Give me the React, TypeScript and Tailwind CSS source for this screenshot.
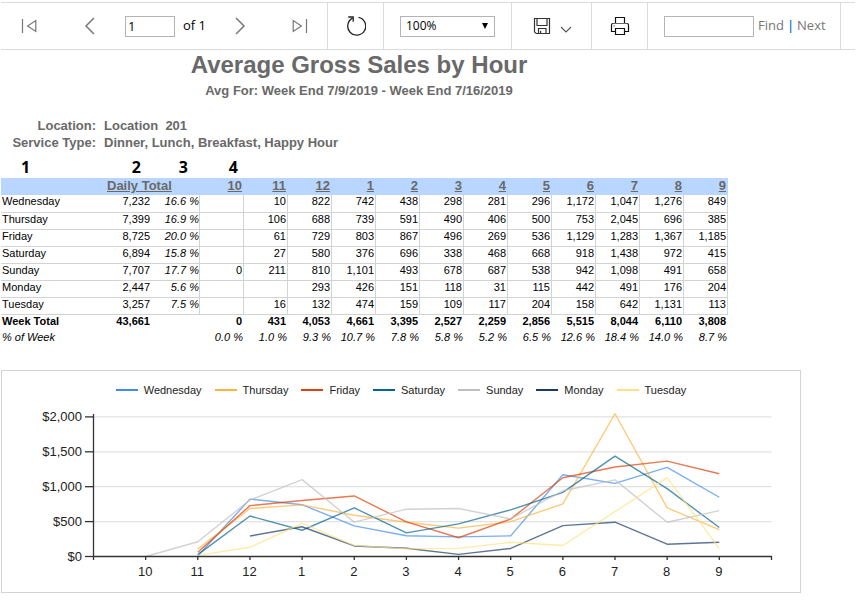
import { useState } from "react";

const HOURS = ["10", "11", "12", "1", "2", "3", "4", "5", "6", "7", "8", "9"];

type DayRow = {
  day: string;
  pct: string;
  total: number;
  color: string;
  sales: (number | null)[];
};

const rows: DayRow[] = [
  { day: "Wednesday", total: 7232, pct: "16.6 %", color: "#418cf0", sales: [null, 10, 822, 742, 438, 298, 281, 296, 1172, 1047, 1276, 849] },
  { day: "Thursday", total: 7399, pct: "16.9 %", color: "#fcb441", sales: [null, 106, 688, 739, 591, 490, 406, 500, 753, 2045, 696, 385] },
  { day: "Friday", total: 8725, pct: "20.0 %", color: "#e0400a", sales: [null, 61, 729, 803, 867, 496, 269, 536, 1129, 1283, 1367, 1185] },
  { day: "Saturday", total: 6894, pct: "15.8 %", color: "#056492", sales: [null, 27, 580, 376, 696, 338, 468, 668, 918, 1438, 972, 415] },
  { day: "Sunday", total: 7707, pct: "17.7 %", color: "#bfbfbf", sales: [0, 211, 810, 1101, 493, 678, 687, 538, 942, 1098, 491, 658] },
  { day: "Monday", total: 2447, pct: "5.6 %", color: "#1a3b69", sales: [null, null, 293, 426, 151, 118, 31, 115, 442, 491, 176, 204] },
  { day: "Tuesday", total: 3257, pct: "7.5 %", color: "#ffe382", sales: [null, 16, 132, 474, 159, 109, 117, 204, 158, 642, 1131, 113] },
];

const weekTotals = [0, 431, 4053, 4661, 3395, 2527, 2259, 2856, 5515, 8044, 6110, 3808];
const weekPct = ["0.0", "1.0", "9.3", "10.7", "7.8", "5.8", "5.2", "6.5", "12.6", "18.4", "14.0", "8.7"];

const fmt = (n: number) => n.toLocaleString("en-US");

function Toolbar() {
  const [page, setPage] = useState("1");
  const [zoom, setZoom] = useState("100%");
  const [search, setSearch] = useState("");

  return (
    <div className="ml-px mr-1 flex h-12 border-y border-[#dadada] font-['Open_Sans',sans-serif] text-[13px] text-black">
      <div className="flex w-[327px] items-center gap-[29px] border-r border-[#dadada] pl-5">
        <button type="button" aria-label="First page" className="mr-4">
          <svg width="16" height="16" viewBox="0 0 16 16" fill="none" stroke="#777" strokeWidth="1.2">
            <path d="M1.5 1v14M14.8 2.6v10.8L6.6 8z" />
          </svg>
        </button>
        <button type="button" aria-label="Previous page">
          <svg width="14" height="18" viewBox="0 0 14 18" fill="none" stroke="#777" strokeWidth="1.5">
            <path d="M12 1 4 9l8 8" />
          </svg>
        </button>
        <div className="flex items-center gap-2">
          <input
            aria-label="Page"
            value={page}
            onChange={(e) => setPage(e.target.value)}
            className="h-[21px] w-[50px] border border-[#b4b4b4] px-[2px]"
          />
          <span className="whitespace-nowrap">of 1</span>
        </div>
        <button type="button" aria-label="Next page">
          <svg width="12" height="18" viewBox="0 0 12 18" fill="none" stroke="#777" strokeWidth="1.5">
            <path d="m1 1 8 8-8 8" />
          </svg>
        </button>
        <button type="button" aria-label="Last page" className="ml-4">
          <svg width="16" height="16" viewBox="0 0 16 16" fill="none" stroke="#777" strokeWidth="1.2">
            <path d="M14.5 1v14M1.2 2.6v10.8L9.4 8z" />
          </svg>
        </button>
      </div>

      <div className="flex w-14 items-center justify-center border-r border-[#dadada]">
        <button type="button" aria-label="Refresh">
          <svg width="20" height="20" viewBox="0 0 20 20" fill="none" stroke="#222" strokeWidth="1.3">
            <path d="M12.6 1.4A9 9 0 1 1 6.6 2.2" />
            <path d="M2.2 1h5v4.8" />
          </svg>
        </button>
      </div>

      <div className="flex w-32 items-center border-r border-[#dadada] pl-4">
        <div className="relative">
          <select
            aria-label="Zoom"
            value={zoom}
            onChange={(e) => setZoom(e.target.value)}
            className="block h-[21px] w-[95px] appearance-none border border-[#b4b4b4] bg-white pl-[5px] text-xs"
          >
            <option>50%</option>
            <option>75%</option>
            <option>100%</option>
            <option>150%</option>
            <option>200%</option>
          </select>
          <svg className="pointer-events-none absolute right-[7px] top-[7px]" width="6" height="6" viewBox="0 0 6 6">
            <path d="M0 0h6L3 6z" fill="#000" />
          </svg>
        </div>
      </div>

      <div className="flex w-20 items-center border-r border-[#dadada] pl-[21px]">
        <button type="button" aria-label="Export" className="flex items-center gap-[9px]">
          <svg width="18" height="18" viewBox="0 0 18 18" fill="none" stroke="#333" strokeWidth="1.2">
            <path d="M1.5 1.5h15v15H3.2l-1.7-1.7zM5.5 16.5v-5h7.5v5M7.6 16.5v-2.8" />
            <path d="M4 1.5v7h10v-7" />
          </svg>
          <svg className="mt-1.5" width="12" height="7" viewBox="0 0 12 7" fill="none" stroke="#555" strokeWidth="1.1">
            <path d="m1 1 5 5 5-5" />
          </svg>
        </button>
      </div>

      <div className="flex w-14 items-center justify-center border-r border-[#dadada]">
        <button type="button" aria-label="Print">
          <svg width="20" height="20" viewBox="0 0 20 20" fill="none" stroke="#111" strokeWidth="1.2">
            <path d="M5.5 7.5v-6h9v6M5.5 15.5H1.5V9q0-1.5 1.5-1.5M17 7.5q1.5 0 1.5 1.5v6.5h-4" />
            <path d="M5.5 12.5h9v6h-9z" />
            <path d="M3 7.5h14M3.5 10h1.5" stroke="#666" />
          </svg>
        </button>
      </div>

      <div className="flex items-center border-r border-[#dadada] pl-4 pr-[14px] text-[#777]">
        <input
          aria-label="Search text"
          value={search}
          onChange={(e) => setSearch(e.target.value)}
          className="mr-1 h-[21px] w-[90px] border border-[#b4b4b4] px-1 text-black"
        />
        <a href="#find">Find</a>
        <span className="mx-[3px] font-semibold text-[#0078c8]">|</span>
        <a href="#next">Next</a>
      </div>
    </div>
  );
}

function SalesTable() {
  return (
    <table className="ml-px table-fixed border-separate border-spacing-0 text-[11px] leading-3 text-black">
      <colgroup>
        <col className="w-[106px]" />
        <col className="w-[44px]" />
        <col className="w-[49px]" />
        {HOURS.map((h) => (
          <col key={h} className="w-[44px]" />
        ))}
      </colgroup>
      <thead>
        <tr className="h-[27px] font-['Open_Sans',sans-serif] text-base leading-4">
          <td className="pb-[3px] pl-5 align-bottom font-bold">1</td>
          <td className="pb-[3px] pr-[10px] text-right align-bottom font-bold">2</td>
          <td className="pb-[3px] pr-3 text-right align-bottom font-bold">3</td>
          <td className="pb-[3px] pr-1.5 text-right align-bottom font-bold">4</td>
          <td colSpan={11}></td>
        </tr>
        <tr className="h-[17px] bg-[#b8d6ff] text-[13px] leading-[15px] text-[#696969]">
          <th className="p-0"></th>
          <th colSpan={2} className="p-0 text-left align-top font-bold">
            <a href="#total" className="underline">Daily Total</a>
          </th>
          {HOURS.map((h) => (
            <th key={h} className="py-0 pl-px pr-[2px] text-right align-top font-bold">
              <a href={`#hour-${h}`} className="underline">{h}</a>
            </th>
          ))}
        </tr>
      </thead>
      <tbody>
        {rows.map((row, i) => (
          <tr key={row.day} className={i === 0 ? "h-[18px]" : "h-[17px]"}>
            <td className="border-b border-[#d3d3d3] px-px py-0 align-top">{row.day}</td>
            <td className="border-b border-[#d3d3d3] px-px py-0 text-right align-top">{fmt(row.total)}</td>
            <td className="border-b border-r border-[#d3d3d3] p-0 text-right align-top italic">{row.pct}</td>
            {row.sales.map((v, j) => (
              <td key={HOURS[j]} className="border-b border-r border-[#d3d3d3] px-px py-0 text-right align-top">
                {v === null ? "" : fmt(v)}
              </td>
            ))}
          </tr>
        ))}
      </tbody>
      <tfoot>
        <tr className="h-4 font-bold">
          <td className="px-px py-0 align-top">Week Total</td>
          <td className="px-px py-0 text-right align-top">43,661</td>
          <td></td>
          {weekTotals.map((v, j) => (
            <td key={HOURS[j]} className="py-0 pl-px pr-[2px] text-right align-top">{fmt(v)}</td>
          ))}
        </tr>
        <tr className="h-[15px] italic">
          <td className="px-px py-0 align-top">% of Week</td>
          <td></td>
          <td></td>
          {weekPct.map((v, j) => (
            <td key={HOURS[j]} className="whitespace-nowrap py-0 pr-px text-right align-top">{v} %</td>
          ))}
        </tr>
      </tfoot>
    </table>
  );
}

const BASE = 158.5;
const LEFT = 91.5;
const STEP = 52.15;

const xAt = (i: number) => LEFT + STEP * (i + 1);
const yAt = (v: number) => BASE - v * 0.0698;

function SalesChart() {
  return (
    <div className="ml-px mt-6 max-w-[800px] border border-[#d3d3d3] pt-[11px] font-['Liberation_Sans',Arial,sans-serif]">
      <ul className="flex justify-center gap-[13px] text-[11px] leading-4 text-[#222]">
        {rows.map((row) => (
          <li key={row.day} className="flex items-center gap-1.5">
            <span className="mb-px h-[2px] w-[22px]" style={{ backgroundColor: row.color }} />
            {row.day}
          </li>
        ))}
      </ul>
      <svg viewBox="0 0 798 194" className="block w-full" fill="none">
        {[500, 1000, 1500, 2000].map((v) => (
          <path key={v} d={`M${LEFT} ${yAt(v)}H769.5`} stroke="#e2e2e2" strokeWidth="1.3" />
        ))}
        {rows.map((row) => (
          <polyline
            key={row.day}
            points={row.sales
              .map((v, i) => (v === null ? "" : `${xAt(i)},${yAt(v)}`))
              .filter(Boolean)
              .join(" ")}
            stroke={row.color}
            strokeWidth="1.4"
            strokeOpacity="0.7"
            strokeLinejoin="round"
          />
        ))}
        <path d={`M${LEFT} 16V162M${LEFT} ${BASE}H769.5V162`} stroke="#333" strokeWidth="1.3" />
        {[0, 500, 1000, 1500, 2000].map((v) => (
          <g key={v}>
            <path d={`M83 ${yAt(v)}H${LEFT}`} stroke="#333" strokeWidth="1.3" />
            <text x="80" y={yAt(v) + 4.5} textAnchor="end" fontSize="13" fill="#222">
              ${fmt(v)}
            </text>
          </g>
        ))}
        {HOURS.map((h, i) => (
          <g key={h}>
            <path d={`M${xAt(i)} ${BASE}v3.5`} stroke="#333" strokeWidth="1.3" />
            <text x={xAt(i) - 0.5} y="178" textAnchor="middle" fontSize="13" fill="#222">
              {h}
            </text>
          </g>
        ))}
      </svg>
    </div>
  );
}

function App() {
  return (
    <div className="min-h-screen bg-white pt-[2px] font-['Liberation_Sans',Arial,sans-serif]">
      <Toolbar />
      <div className="max-w-[718px] text-center font-bold text-[#696969]">
        <h1 className="text-2xl leading-[30px]">Average Gross Sales by Hour</h1>
        <h2 className="text-[13px] leading-[22px]">Avg For: Week End 7/9/2019 - Week End 7/16/2019</h2>
      </div>
      <dl className="mt-[15px] grid grid-cols-[96px_1fr] gap-x-2 text-[13px] font-bold leading-[17px] text-[#696969]">
        <dt className="text-right">Location:</dt>
        <dd className="whitespace-pre">{"Location  201"}</dd>
        <dt className="text-right">Service Type:</dt>
        <dd>Dinner, Lunch, Breakfast, Happy Hour</dd>
      </dl>
      <SalesTable />
      <SalesChart />
    </div>
  );
}

export default App;
